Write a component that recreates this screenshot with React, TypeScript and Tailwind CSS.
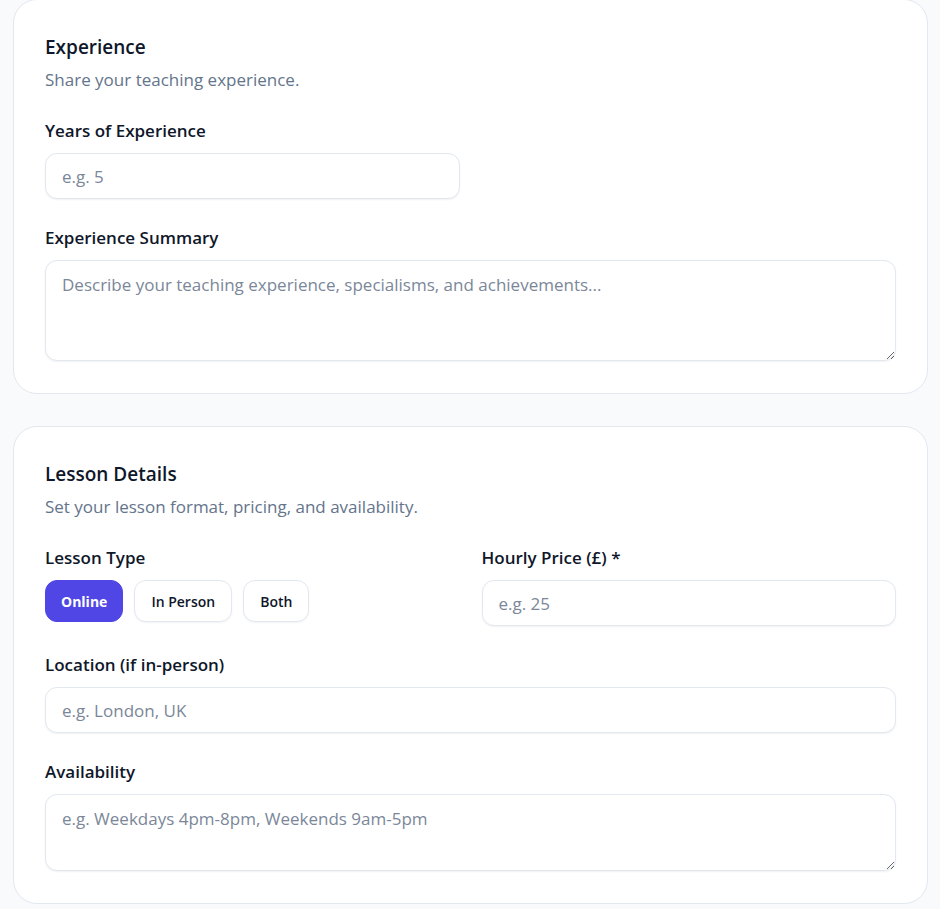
import React, { useState } from "react";

const font = { fontFamily: '"Open Sans", "Noto Sans", sans-serif' };

function Field({ label, children }: { label: string; children: React.ReactNode }) {
  return (
    <div className="flex flex-col gap-[10px]">
      <label className="text-[17px] leading-[24px] font-semibold text-[#0f172a]">{label}</label>
      {children}
    </div>
  );
}

const inputCls =
  "h-[46px] w-full rounded-[12px] border border-[#e2e8f0] bg-white px-[16px] text-[17px] text-[#0f172a] shadow-[0_1px_2px_rgba(15,23,42,0.06)] outline-none placeholder:text-[#7b8799]";

const areaCls =
  "w-full rounded-[12px] border border-[#e2e8f0] bg-white px-[16px] py-[12px] text-[17px] leading-[24px] text-[#0f172a] shadow-[0_1px_2px_rgba(15,23,42,0.06)] outline-none placeholder:text-[#7b8799]";

function Card({ title, subtitle, children }: { title: string; subtitle: string; children: React.ReactNode }) {
  return (
    <section className="rounded-[24px] border border-[#e2e8f0] bg-white px-[31px] pt-[33px] pb-[32px]">
      <div className="flex flex-col gap-[7px]">
        <h2 className="text-[19px] leading-[28px] font-semibold text-[#0f172a] m-0">{title}</h2>
        <p className="text-[17px] leading-[24px] text-[#64748b] m-0">{subtitle}</p>
      </div>
      <div className="mt-[27px] flex flex-col gap-[27px]">{children}</div>
    </section>
  );
}

export default function App() {
  const [lessonType, setLessonType] = useState("Online");

  return (
    <div className="min-h-screen bg-[#f8fafc] px-[13px] pb-[6px]" style={font}>
      <div className="-mt-px flex flex-col gap-[32px] w-[915px]">
        <Card title="Experience" subtitle="Share your teaching experience.">
          <Field label="Years of Experience">
            <input className={inputCls} style={{ width: 415 }} placeholder="e.g. 5" />
          </Field>
          <Field label="Experience Summary">
            <textarea
              className={`${areaCls} h-[101px]`}
              placeholder="Describe your teaching experience, specialisms, and achievements..."
            />
          </Field>
        </Card>

        <Card title="Lesson Details" subtitle="Set your lesson format, pricing, and availability.">
          <div className="grid grid-cols-2 gap-[22px]">
            <div className="flex flex-col gap-[10px]">
              <label className="text-[17px] leading-[24px] font-semibold text-[#0f172a]">Lesson Type</label>
              <div className="flex gap-[11px]">
                {["Online", "In Person", "Both"].map((t) => (
                  <button
                    key={t}
                    onClick={() => setLessonType(t)}
                    className={
                      lessonType === t
                        ? "h-[42px] rounded-[12px] border border-[#4f46e5] bg-[#4f46e5] px-[15px] text-[14px] font-bold text-white"
                        : "h-[42px] rounded-[12px] border border-[#e2e8f0] bg-white px-[16px] text-[14px] font-semibold text-[#0f172a] shadow-[0_1px_2px_rgba(15,23,42,0.05)]"
                    }
                  >
                    {t}
                  </button>
                ))}
              </div>
            </div>
            <Field label="Hourly Price (£) *">
              <input className={inputCls} placeholder="e.g. 25" />
            </Field>
          </div>
          <Field label="Location (if in-person)">
            <input className={inputCls} placeholder="e.g. London, UK" />
          </Field>
          <Field label="Availability">
            <textarea className={`${areaCls} h-[77px]`} placeholder="e.g. Weekdays 4pm-8pm, Weekends 9am-5pm" />
          </Field>
        </Card>
      </div>
    </div>
  );
}
